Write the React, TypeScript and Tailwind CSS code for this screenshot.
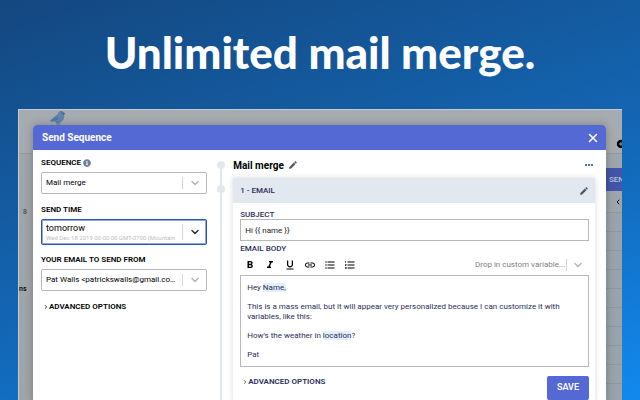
import { ChevronDown, ChevronLeft, ChevronRight, X } from "lucide-react";
import { FaInfoCircle } from "react-icons/fa";
import {
  MdAddCircle,
  MdEdit,
  MdFormatBold,
  MdFormatItalic,
  MdFormatListBulleted,
  MdFormatListNumbered,
  MdFormatUnderlined,
  MdInsertLink,
  MdMoreHoriz,
} from "react-icons/md";
import { clsx } from "clsx";

type SelectBoxProps = {
  id: string;
  value: string;
  hint?: string;
  active?: boolean;
};

const SelectBox = ({ id, value, hint, active }: SelectBoxProps) => {
  return (
    <div
      className={clsx(
        "relative flex items-center rounded-xs border bg-white",
        active ? "h-[26px] border-[#2a52be] ring-1 ring-inset ring-[#2a52be]/50" : "h-[22px] border-[#b8b8b8]"
      )}
    >
      <select
        id={id}
        className={clsx(
          "h-full w-full appearance-none truncate pl-1 pr-7 text-black outline-none",
          hint ? "pb-[7px] text-[9px]" : "text-[8px]"
        )}
      >
        <option>{value}</option>
      </select>
      {hint && (
        <span className="pointer-events-none absolute bottom-[3px] left-1 right-6 overflow-hidden whitespace-nowrap text-[6px] leading-[7px] text-[#bdbdbd]">
          {hint}
        </span>
      )}
      <div className="pointer-events-none absolute inset-y-1 right-0 flex w-6 items-center justify-center border-l border-[#d4d4d4]">
        <ChevronDown className={clsx("h-3 w-3", active ? "text-[#333]" : "text-[#b5b5b5]")} strokeWidth={3} />
      </div>
    </div>
  );
};

const AdvancedOptions = () => {
  return (
    <button className="flex h-3 items-center text-[8px] font-semibold leading-3">
      <ChevronRight className="h-[6px] w-[6px]" strokeWidth={3} />
      ADVANCED OPTIONS
    </button>
  );
};

const Bird = () => {
  return (
    <svg viewBox="0 0 30 28" className="h-[14px] w-[15px]">
      <path d="M14 21v7M18 21v7" stroke="#4c6580" strokeWidth="1.5" />
      <path
        d="M1 19 L12 10 C15 8 17 6 17.500 4 C18.500 0 25 -1 27 3.500 L29.500 5 L27.500 6 C28.500 14 26 20 20 22 C15 23.500 11 22 9 20 L2 21 Z"
        fill="#5f86b5"
        stroke="#466388"
      />
      <path d="M3 19 L13 12 C17 11 19 14 16 17 C13 19 8 18 3 20 Z" fill="#5177a5" />
      <path d="M26.500 4.500 L30 5.500 L27 7 Z" fill="#2c3642" />
      <circle cx="24" cy="4" r="1" fill="#22303f" />
    </svg>
  );
};

const tools = [
  { label: "Bold", icon: MdFormatBold },
  { label: "Italic", icon: MdFormatItalic },
  { label: "Underline", icon: MdFormatUnderlined },
  { label: "Link", icon: MdInsertLink },
  { label: "Bulleted list", icon: MdFormatListBulleted },
  { label: "Numbered list", icon: MdFormatListNumbered },
];

const Sidebar = () => {
  return (
    <div className="w-[30%] shrink-0 pt-[7px]">
      <label htmlFor="sequence" className="flex h-3 items-center gap-[2px] text-[8px] font-semibold">
        SEQUENCE
        <FaInfoCircle className="h-2 w-2 text-[#718096]" />
      </label>
      <div className="pt-[3px]">
        <SelectBox id="sequence" value="Mail merge" />
      </div>
      <label htmlFor="time" className="mt-[10px] flex h-3 items-center text-[8px] font-semibold">
        SEND TIME
      </label>
      <div className="pt-[3px]">
        <SelectBox id="time" value="tomorrow" hint="Wed Dec 18 2019 00:00:00 GMT-0700 (Mountain" active />
      </div>
      <label htmlFor="from" className="mt-[9px] flex h-3 items-center text-[8px] font-semibold">
        YOUR EMAIL TO SEND FROM
      </label>
      <div className="pb-[10px] pt-[3px]">
        <SelectBox id="from" value="Pat Walls <patrickswalls@gmail.com>" />
      </div>
      <div className="pl-[2px]">
        <AdvancedOptions />
      </div>
    </div>
  );
};

const Timeline = () => {
  return (
    <div className="flex w-[26px] shrink-0 flex-col items-center pl-[2px] pt-[11px]">
      <div className="h-2 w-2 rounded-full bg-[#e2e8f0]" />
      <div className="h-4 w-[2px] bg-[#e2e8f0]" />
      <div className="h-2 w-2 rounded-full bg-[#e2e8f0]" />
      <div className="w-[2px] flex-1 bg-[#e2e8f0]" />
    </div>
  );
};

const EmailCard = () => {
  return (
    <div className="flex flex-1 flex-col bg-white text-[#2a2f5b] shadow-[0_0_6px_rgba(0,0,0,0.15)]">
      <div className="flex h-[25px] shrink-0 items-center justify-between bg-[#e2e8f0] pl-[7px] pr-[6px] text-[8px] font-medium">
        1 - EMAIL
        <button aria-label="Edit email">
          <MdEdit className="h-[10px] w-[10px] text-[#4a5568]" />
        </button>
      </div>
      <div className="pl-[7px] pr-[6px] pt-[6px]">
        <label htmlFor="subject" className="block h-[10px] text-[8px] font-medium leading-3">
          SUBJECT
        </label>
        <input
          id="subject"
          defaultValue="Hi {{ name }}"
          className="block h-[22px] w-full border border-[#b8b8b8] px-1 text-[8px] text-[#222] outline-none"
        />
        <div id="body-label" className="mt-[2px] h-3 text-[8px] font-medium leading-3">
          EMAIL BODY
        </div>
        <div className="flex h-5 items-center justify-between">
          <div className="flex items-center gap-2 pl-1">
            {tools.map(({ label, icon: Icon }) => (
              <button key={label} aria-label={label} className="text-black">
                <Icon className="h-3 w-3" />
              </button>
            ))}
          </div>
          <div className="relative flex h-4 items-center">
            <select aria-label="Custom variable" className="w-[114px] appearance-none text-[8px] text-[#808080] outline-none">
              <option>Drop in custom variable...</option>
            </select>
            <div className="pointer-events-none absolute inset-y-[2px] right-0 flex w-[23px] items-center justify-center border-l border-[#d4d4d4]">
              <ChevronDown className="h-3 w-3 text-[#b5b5b5]" strokeWidth={3} />
            </div>
          </div>
        </div>
        <div
          role="textbox"
          aria-labelledby="body-label"
          contentEditable
          suppressContentEditableWarning
          className="flex h-[92px] flex-col gap-[9px] border border-[#b8b8b8] px-[6px] pt-[7px] text-[8px] leading-[10px] outline-none"
        >
          <p>
            Hey <span className="bg-[#e1f0fb]">Name,</span>
          </p>
          <p>
            This is a mass email, but it will appear very personalized because I can customize it with variables, like this:
          </p>
          <p>
            How's the weather in <span className="bg-[#e1f0fb]">location</span>?
          </p>
          <p>Pat</p>
        </div>
        <div className="flex items-start justify-between pl-[2px] pt-[9px]">
          <AdvancedOptions />
          <button className="h-6 rounded-xs bg-[#5469d4] px-[10px] text-[9px] font-semibold text-white">SAVE</button>
        </div>
      </div>
    </div>
  );
};

const Modal = () => {
  return (
    <div role="dialog" aria-labelledby="title" className="z-10 flex min-w-0 flex-1 flex-col rounded-t-[4px] bg-white shadow-[0_0_8px_rgba(0,0,0,0.25)]">
      <div className="flex h-[25px] shrink-0 items-center justify-between rounded-t-[4px] bg-[#5469d4] pl-[9px] pr-[6px] text-white">
        <h2 id="title" className="text-[10px] font-bold">
          Send Sequence
        </h2>
        <button aria-label="Close">
          <X className="h-[14px] w-[14px]" strokeWidth={2.5} />
        </button>
      </div>
      <div className="flex flex-1 pl-2 pr-[11px]">
        <Sidebar />
        <Timeline />
        <div className="flex min-w-0 flex-1 flex-col">
          <div className="flex h-7 shrink-0 items-center justify-between pt-[2px]">
            <div className="flex items-center gap-1">
              <h3 className="text-[10px] font-bold">Mail merge</h3>
              <button aria-label="Rename sequence">
                <MdEdit className="h-[10px] w-[10px] text-[#4a5568]" />
              </button>
            </div>
            <button aria-label="More" className="text-[#2b50a0]">
              <MdMoreHoriz className="h-3 w-3" />
            </button>
          </div>
          <EmailCard />
        </div>
      </div>
    </div>
  );
};

const App = () => {
  return (
    <div className="flex h-screen flex-col overflow-hidden bg-[linear-gradient(162deg,#14477f_0%,#145a9f_33%,#136cbf_65%,#1289ee_100%)] font-[Roboto,sans-serif] text-black">
      <h1 className="flex h-[109px] shrink-0 items-center justify-center pb-[6px] font-[Lato,sans-serif] text-[44px] font-black text-white">
        Unlimited mail merge.
      </h1>
      <div className="mx-[18px] flex flex-1 flex-col overflow-hidden border-l border-t border-[#c4ccd3] bg-[#a6abaf]">
        <div className="h-[15px] shrink-0 pl-[31px] pt-[1px]">
          <Bird />
        </div>
        <div className="flex flex-1">
          <div className="flex w-[14px] shrink-0 flex-col overflow-hidden text-[7px] leading-[10px] text-[#333]">
            <div className="h-[29px] shrink-0 border-b border-[#959a9f]" />
            <div className="flex-1 bg-[#a0a5aa]">
              <div className="pl-1 pt-[53px]">8</div>
              <div className="pt-[67px] font-medium text-black">ns</div>
            </div>
          </div>
          <Modal />
          <div className="flex w-4 shrink-0 flex-col overflow-hidden bg-[#9ea5ab]">
            <div className="flex h-[29px] shrink-0 items-end border-b border-[#959a9f] bg-[#a6abaf] pb-1 pl-[10px]">
              <MdAddCircle className="h-[10px] w-[10px] shrink-0 text-black" />
            </div>
            <div className="mt-[14px] flex h-[23px] shrink-0 items-center bg-[#4355a6] pl-[3px] text-[8px] font-medium text-[#bcc3d8]">
              SEND
            </div>
            <div className="flex h-[22px] shrink-0 items-center border-b border-[#8f989f] pl-2">
              <ChevronLeft className="h-2 w-2 text-black" strokeWidth={3} />
            </div>
            {[0, 1, 2, 3, 4, 5, 6, 7, 8, 9].map((row) => (
              <div key={row} className="h-[19px] shrink-0 border-b border-[#8f989f] bg-[#99a3ab]" />
            ))}
          </div>
        </div>
      </div>
    </div>
  );
};

export default App;
